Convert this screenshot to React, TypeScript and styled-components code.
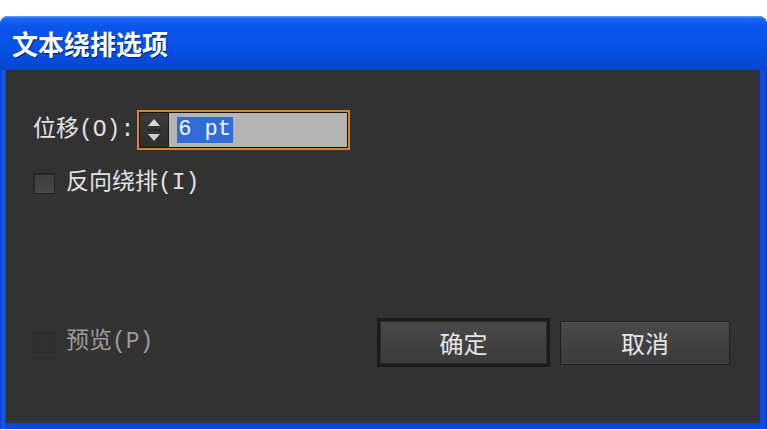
import styled, { createGlobalStyle } from "styled-components";

const GlobalStyle = createGlobalStyle`
    html, body {
        margin: 0;
        padding: 0;
        background: #ffffff;
        width: 767px;
        height: 430px;
        overflow: hidden;
    }
    * {
        box-sizing: border-box;
    }
`

const UI_FONT = `"Liberation Mono", "Noto Sans CJK SC", monospace`

const Window = styled.div`
    margin-top: 16px;
    width: 767px;
    height: 413px;
    border-radius: 8px 8px 0 0;
    background: linear-gradient(to right, #0a3fd0 0, #1a5cf0 3px, #0846dc 6px, #0846dc 760px, #1550e8 763px, #0a36c4 767px);
    display: flex;
    flex-direction: column;
    overflow: hidden;
`

const TitleBar = styled.div`
    height: 54px;
    flex: none;
    display: flex;
    align-items: center;
    padding-left: 12px;
    border-radius: 8px 8px 0 0;
    background: linear-gradient(to bottom, #3d86fa 0, #1866f4 3px, #0a56ec 10px, #0652e6 30px, #0649d8 48px, #0a44cc 54px);
    box-shadow: inset 0 1px 0 #5a9cff;
`

const Title = styled.div`
    font-family: "Noto Sans CJK SC", sans-serif;
    font-weight: 700;
    font-size: 26px;
    line-height: 1;
    color: #ffffff;
    text-shadow: 1px 1px 0 #0a1e70;
    transform: scaleY(1.05);
`

const Body = styled.div`
    flex: 1;
    margin: 0 7px 6px 6px;
    background: #323232;
    padding: 40px 30px 56px 27px;
    display: flex;
    flex-direction: column;
    font-family: ${UI_FONT};
    font-size: 23px;
    color: #e2e2e2;
`

const FieldRow = styled.div`
    display: flex;
    align-items: center;
    height: 40px;
`

const Label = styled.span`
    margin-right: 3px;
    white-space: nowrap;
    line-height: 1;
`

const SpinBox = styled.div`
    width: 213px;
    height: 40px;
    border: 2px solid #d7862c;
    display: flex;
    background: #111;
    padding: 1px;
`

const Spinner = styled.div`
    width: 29px;
    flex: none;
    display: flex;
    align-items: center;
    justify-content: center;
    background: linear-gradient(to bottom, #3a3a3a, #2e2e2e);
    border-right: 1px solid #1a1a1a;
`

const FieldValue = styled.div`
    flex: 1;
    background: #b4b4b4;
    display: flex;
    align-items: center;
    padding-left: 8px;
`

const Selection = styled.span`
    background: #2f6cd6;
    color: #f4f8ff;
    font-family: "Liberation Mono", monospace;
    font-size: 22px;
    line-height: 26px;
    padding: 0 2px 0 1px;
`

const CheckRow = styled.label<{ $disabled?: boolean }>`
    display: flex;
    align-items: center;
    gap: 11px;
    height: 26px;
    line-height: 1;
    color: ${p => (p.$disabled ? "#9c9c9c" : "#e2e2e2")};
`

const Box = styled.span<{ $disabled?: boolean }>`
    width: 22px;
    height: 21px;
    flex: none;
    border: 1px solid ${p => (p.$disabled ? "#2a2a2a" : "#232323")};
    background: ${p => (p.$disabled ? "#303030" : "linear-gradient(to bottom, #3e3e3e, #474747)")};
    box-shadow: ${p => (p.$disabled ? "none" : "inset 1px 1px 0 #2a2a2a")};
`

const Spacer = styled.div`
    flex: 1;
`

const Footer = styled.div`
    display: flex;
    align-items: center;
    height: 49px;
`

const Buttons = styled.div`
    margin-left: auto;
    display: flex;
    align-items: center;
    gap: 10px;
`

const Button = styled.button<{ $default?: boolean }>`
    width: ${p => (p.$default ? "173px" : "170px")};
    height: ${p => (p.$default ? "49px" : "44px")};
    border: ${p => (p.$default ? "3px solid #1b1b1b" : "1px solid #1e1e1e")};
    outline: ${p => (p.$default ? "none" : "none")};
    box-shadow: ${p => (p.$default ? "inset 0 0 0 1px #2a2a2a" : "inset 0 1px 0 #505050")};
    background: linear-gradient(to bottom, #4a4a4a, #404040 60%, #3c3c3c);
    color: #e6e6e6;
    font-family: "Noto Sans CJK SC", sans-serif;
    font-size: 24px;
    line-height: 1;
    padding: 0;
    cursor: default;
`

function SpinArrows() {
    return (
        <svg width="14" height="26" viewBox="0 0 14 26">
            <polygon points="7,2 13,9 1,9" fill="#d8d8d8" />
            <line x1="0" y1="13" x2="14" y2="13" stroke="#1c1c1c" strokeWidth="1" />
            <polygon points="1,17 13,17 7,24" fill="#cfcfcf" />
        </svg>
    )
}

export default function App() {
    return <>
        <GlobalStyle />
        <Window>
            <TitleBar>
                <Title>文本绕排选项</Title>
            </TitleBar>
            <Body>
                <FieldRow>
                    <Label>位移(O):</Label>
                    <SpinBox>
                        <Spinner><SpinArrows /></Spinner>
                        <FieldValue>
                            <Selection>6 pt</Selection>
                        </FieldValue>
                    </SpinBox>
                </FieldRow>
                <CheckRow style={{ marginTop: 20 }}>
                    <Box />
                    反向绕排(I)
                </CheckRow>
                <Spacer />
                <Footer>
                    <CheckRow $disabled>
                        <Box $disabled />
                        预览(P)
                    </CheckRow>
                    <Buttons>
                        <Button $default>确定</Button>
                        <Button>取消</Button>
                    </Buttons>
                </Footer>
            </Body>
        </Window>
    </>
}
